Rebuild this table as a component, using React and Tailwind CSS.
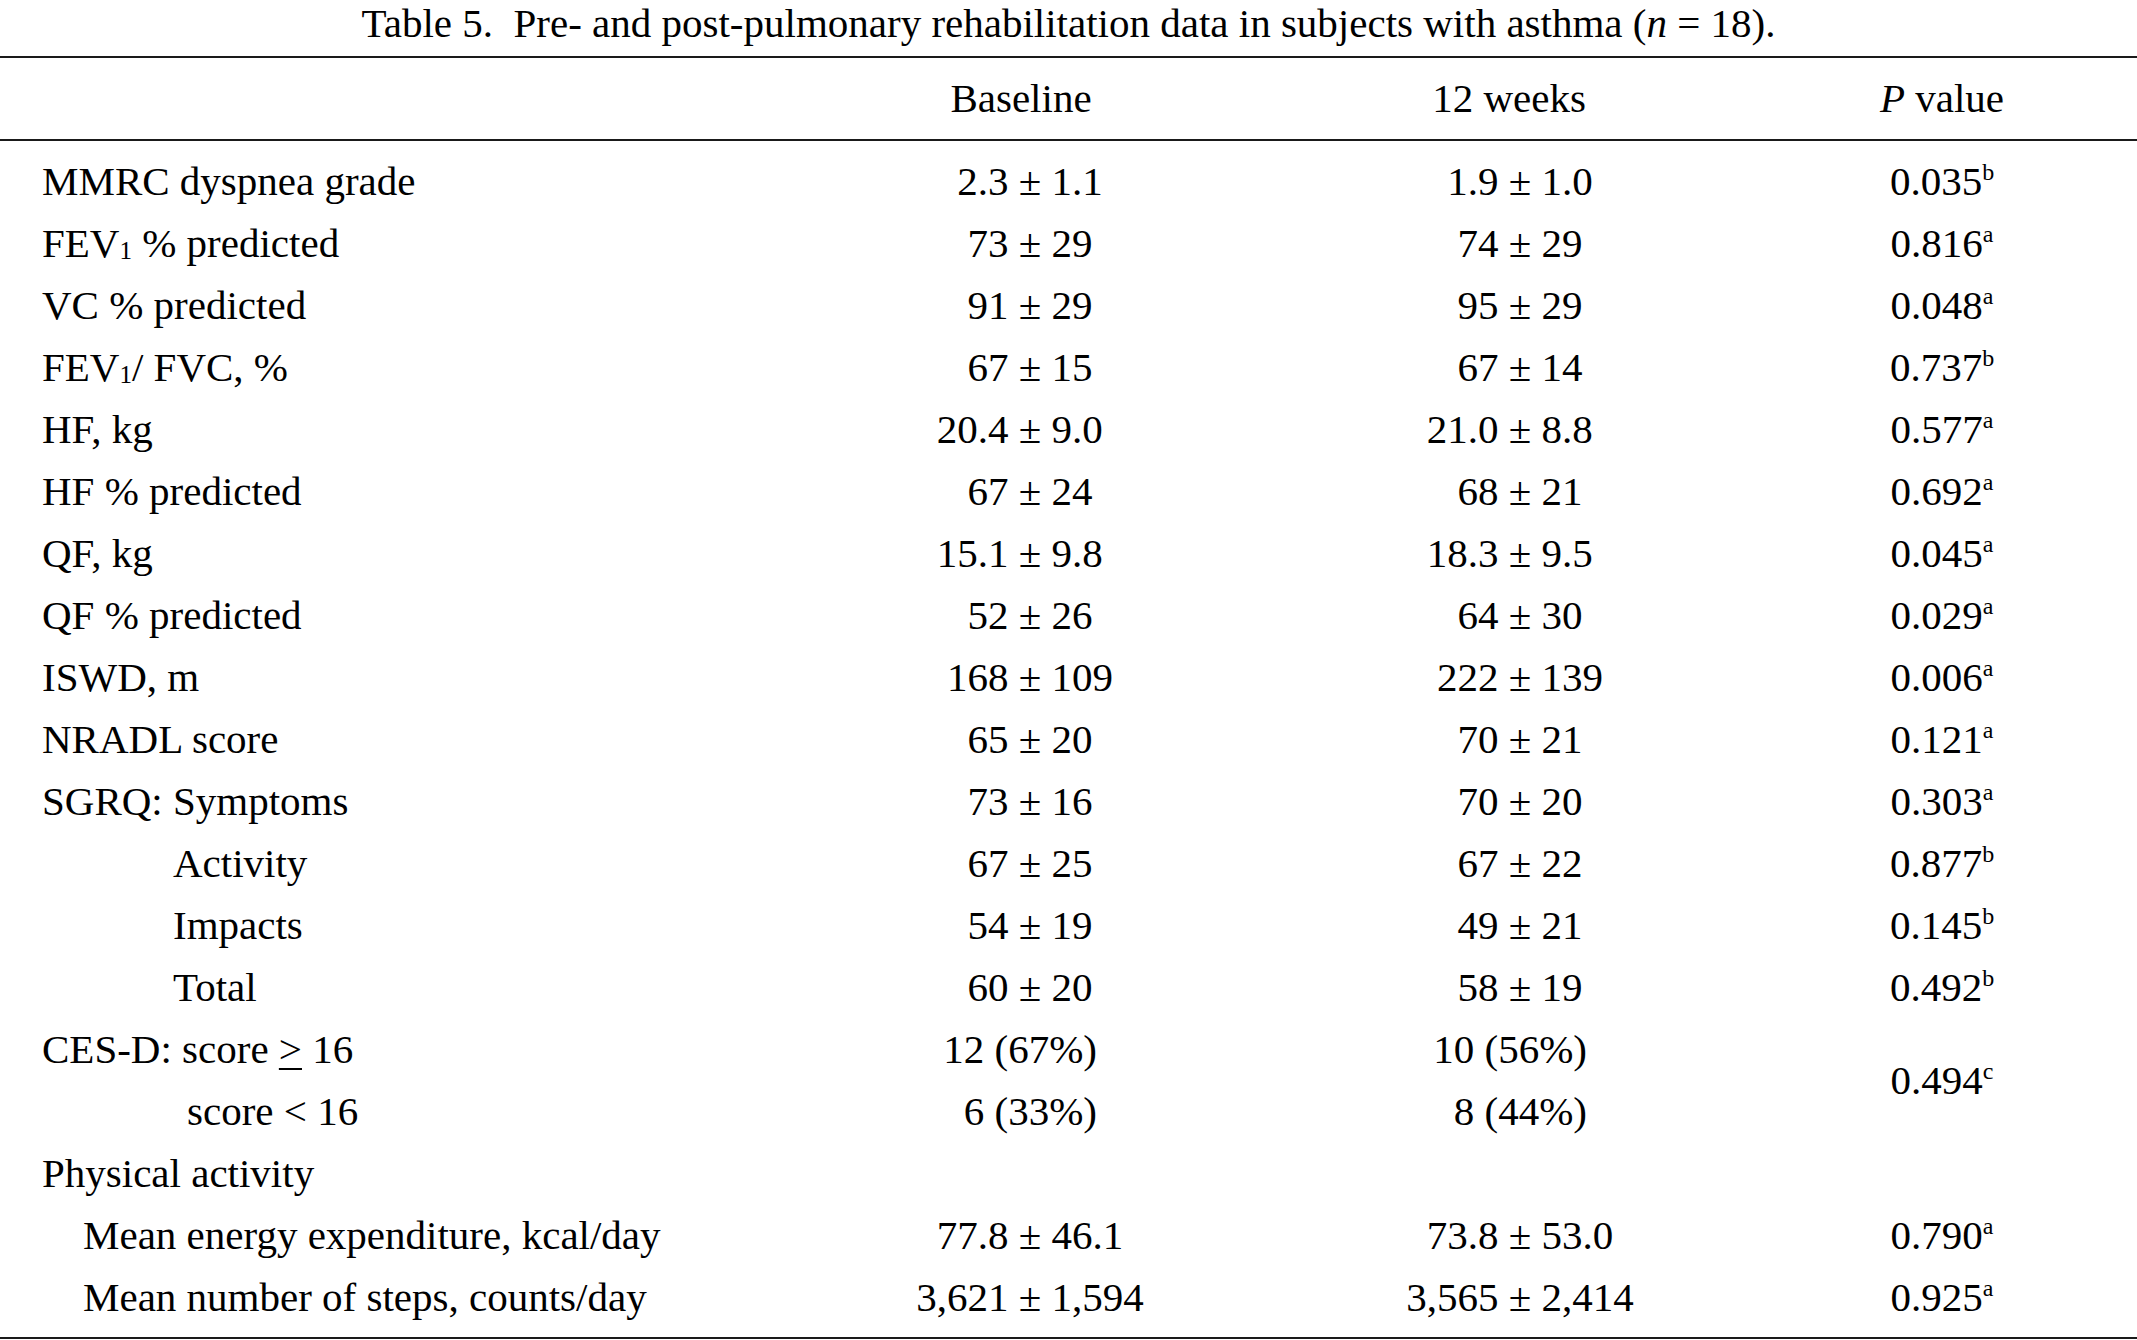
import React from 'react';

const PM = ({ a, b }) => (
    <div className="grid w-full grid-cols-[1fr_auto_1fr] items-center">
        <span className="justify-self-end">{a}</span>
        <span className="whitespace-pre"> ± </span>
        <span className="justify-self-start">{b}</span>
    </div>
);

const Count = ({ v }) => <div className="w-full pr-[133px] text-right">{v}</div>;

const Sup = ({ c }) => <span className="relative -top-[15px] text-[24px] leading-none">{c}</span>;
const Sub = ({ c }) => <span className="relative top-[7px] text-[25px] leading-none">{c}</span>;

const P = ({ v, s }) => (
    <span>
        {v}
        <Sup c={s} />
    </span>
);

const rows = [
    { label: 'MMRC dyspnea grade', base: ['2.3', '1.1'], wk: ['1.9', '1.0'], p: ['0.035', 'b'] },
    { label: <>FEV<Sub c="1" /> % predicted</>, base: ['73', '29'], wk: ['74', '29'], p: ['0.816', 'a'] },
    { label: 'VC % predicted', base: ['91', '29'], wk: ['95', '29'], p: ['0.048', 'a'] },
    { label: <>FEV<Sub c="1" />/ FVC, %</>, base: ['67', '15'], wk: ['67', '14'], p: ['0.737', 'b'] },
    { label: 'HF, kg', base: ['20.4', '9.0'], wk: ['21.0', '8.8'], p: ['0.577', 'a'] },
    { label: 'HF % predicted', base: ['67', '24'], wk: ['68', '21'], p: ['0.692', 'a'] },
    { label: 'QF, kg', base: ['15.1', '9.8'], wk: ['18.3', '9.5'], p: ['0.045', 'a'] },
    { label: 'QF % predicted', base: ['52', '26'], wk: ['64', '30'], p: ['0.029', 'a'] },
    { label: 'ISWD, m', base: ['168', '109'], wk: ['222', '139'], p: ['0.006', 'a'] },
    { label: 'NRADL score', base: ['65', '20'], wk: ['70', '21'], p: ['0.121', 'a'] },
    { label: 'SGRQ: Symptoms', base: ['73', '16'], wk: ['70', '20'], p: ['0.303', 'a'] },
    { label: 'Activity', indent: 'pl-[173px]', base: ['67', '25'], wk: ['67', '22'], p: ['0.877', 'b'] },
    { label: 'Impacts', indent: 'pl-[173px]', base: ['54', '19'], wk: ['49', '21'], p: ['0.145', 'b'] },
    { label: 'Total', indent: 'pl-[173px]', base: ['60', '20'], wk: ['58', '19'], p: ['0.492', 'b'] },
];

const tail = [
    { label: 'Mean energy expenditure, kcal/day', base: ['77.8', '46.1'], wk: ['73.8', '53.0'], p: ['0.790', 'a'] },
    { label: 'Mean number of steps, counts/day', base: ['3,621', '1,594'], wk: ['3,565', '2,414'], p: ['0.925', 'a'] },
];

const cell = 'flex items-center';

export default function App() {
    return (
        <div className="h-[1340px] w-[2137px] overflow-hidden bg-white font-['Liberation_Serif',serif] text-[41px] text-black">
            {/* caption */}
            <div className="flex h-[46px] items-center justify-center whitespace-pre leading-none">
                Table 5.  Pre- and post-pulmonary rehabilitation data in subjects with asthma (<i>n</i> = 18).
            </div>
            <div className="mt-[10px] h-[2px] bg-[#1a1a1a]" />

            {/* header */}
            <div className="grid h-[81px] grid-cols-[740px_400px_400px_264px] gap-x-[90px]">
                <div />
                <div className={`${cell} justify-center pr-[18px]`}>Baseline</div>
                <div className={`${cell} justify-center pr-[22px]`}>12 weeks</div>
                <div className={`${cell} justify-center`}>
                    <span><i>P</i> value</span>
                </div>
            </div>
            <div className="h-[2px] bg-[#1a1a1a]" />

            {/* body */}
            <div className="mt-[9px] grid auto-rows-[62px] grid-cols-[740px_400px_400px_264px] gap-x-[90px] leading-none">
                {rows.map((r, i) => (
                    <React.Fragment key={i}>
                        <div className={`${cell} ${r.indent || 'pl-[42px]'} whitespace-pre`}>{r.label}</div>
                        <div className={cell}><PM a={r.base[0]} b={r.base[1]} /></div>
                        <div className={cell}><PM a={r.wk[0]} b={r.wk[1]} /></div>
                        <div className={`${cell} justify-center`}><P v={r.p[0]} s={r.p[1]} /></div>
                    </React.Fragment>
                ))}

                {/* CES-D */}
                <div className={`${cell} pl-[42px] whitespace-pre`}>
                    CES-D: score <span className="underline decoration-[2px] underline-offset-[5px]">&gt;</span> 16
                </div>
                <div className={cell}><Count v="12 (67%)" /></div>
                <div className={cell}><Count v="10 (56%)" /></div>
                <div className={`${cell} row-span-2 justify-center`}><P v="0.494" s="c" /></div>
                <div className={`${cell} pl-[187px] whitespace-pre`}>score &lt; 16</div>
                <div className={cell}><Count v="6 (33%)" /></div>
                <div className={cell}><Count v="8 (44%)" /></div>

                <div className={`${cell} col-span-4 pl-[42px]`}>Physical activity</div>

                {tail.map((r, i) => (
                    <React.Fragment key={i}>
                        <div className={`${cell} pl-[83px] whitespace-pre`}>{r.label}</div>
                        <div className={cell}><PM a={r.base[0]} b={r.base[1]} /></div>
                        <div className={cell}><PM a={r.wk[0]} b={r.wk[1]} /></div>
                        <div className={`${cell} justify-center`}><P v={r.p[0]} s={r.p[1]} /></div>
                    </React.Fragment>
                ))}
            </div>
            <div className="mt-[9px] h-[2px] bg-[#1a1a1a]" />
        </div>
    );
}
